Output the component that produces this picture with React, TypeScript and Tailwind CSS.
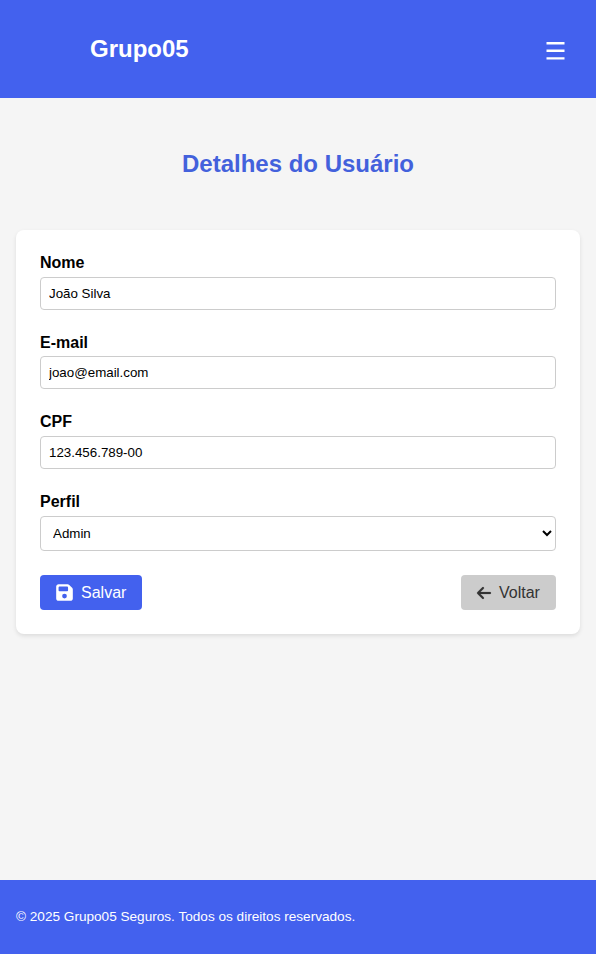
import React from "react";
import { FaFloppyDisk, FaArrowLeft } from "react-icons/fa6";

const inputClass =
  "block w-full h-[33px] rounded-[4px] border border-[#cccccc] bg-white px-2 text-[13.333px] text-black outline-none";

function Field({ label, value, labelGap = "mb-[5px]" }: { label: string; value: string; labelGap?: string }) {
  return (
    <div className="mb-[23px]">
      <label className={`${labelGap} block text-[16px] leading-[19px] font-bold text-black`}>{label}</label>
      <input className={inputClass} type="text" defaultValue={value} />
    </div>
  );
}

export default function App() {
  return (
    <div className="flex h-[954px] flex-col bg-[#f5f5f5] font-['Liberation_Sans',Arial,sans-serif]">
      <header className="flex h-[98px] items-center justify-between bg-[#4361ee] pr-[31px] pl-[90px] text-white">
        <div className="text-[24px] leading-[28px] font-bold">Grupo05</div>
        <button className="mt-[3px]" aria-label="Menu">
          <svg width="19" height="18" viewBox="0 0 19 18" fill="currentColor">
            <path d="M.5 0h18v2.4H.5zM.5 7.6h18V10H.5zM.5 15.3h18v2.2H.5z" />
          </svg>
        </button>
      </header>
      <main className="flex flex-1 flex-col px-4 pt-[50px]">
        <h1 className="text-center text-[24px] leading-[32px] font-bold text-[#4361dc]">Detalhes do Usuário</h1>
        <form className="mt-[50px] h-[404px] rounded-[8px] bg-white px-6 pt-[23px] shadow-[0_2px_4px_rgba(0,0,0,0.1)]">
          <Field label="Nome" value="João Silva" />
          <Field label="E-mail" value="joao@email.com" labelGap="mb-[4px]" />
          <Field label="CPF" value="123.456.789-00" />
          <label className="mb-[5px] block text-[16px] leading-[19px] font-bold text-black">Perfil</label>
          <select className="block h-[35px] w-full rounded-[4px] border border-[#cccccc] bg-white px-2 text-[13.333px] text-black">
            <option>Admin</option>
          </select>
          <div className="mt-6 flex justify-between">
            <button type="button" className="flex h-[35px] w-[102px] items-center gap-[7px] rounded-[4px] bg-[#4361ee] pl-[15px] text-[16px] text-white">
              <FaFloppyDisk size={19} /><span className="pt-px">Salvar</span>
            </button>
            <button type="button" className="flex h-[35px] w-[95px] items-center gap-[7px] rounded-[4px] bg-[#cccccc] pl-[15px] text-[16px] text-[#333333]">
              <FaArrowLeft size={16} className="stroke-current stroke-[6px]" /><span className="pt-px">Voltar</span>
            </button>
          </div>
        </form>
      </main>
      <footer className="flex h-[74px] items-center bg-[#4361ee] px-4 text-[13.6px] text-white">
        © 2025 Grupo05 Seguros. Todos os direitos reservados.
      </footer>
    </div>
  );
}
